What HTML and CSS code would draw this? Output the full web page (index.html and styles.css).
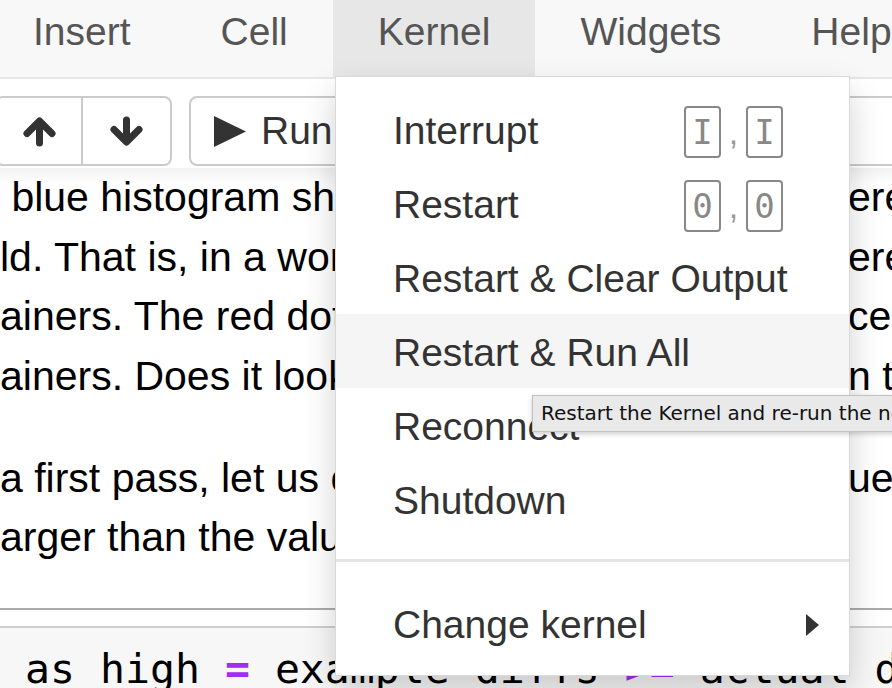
FILE: index.html
```html
<!DOCTYPE html>
<html>
<head>
<meta charset="utf-8">
<title>Notebook</title>
<link rel="stylesheet" href="styles.css">
</head>
<body>
<div class="page">
  <nav class="menubar">
    <span class="mitem first">Insert</span>
    <span class="mitem">Cell</span>
    <span class="mitem open">Kernel</span>
    <span class="mitem">Widgets</span>
    <span class="mitem">Help</span>
  </nav>

  <div class="toolbar">
    <div class="btn-group moves">
      <span class="btn icon-btn">
        <svg width="33" height="31" viewBox="0 0 33 31"><path d="M16.5 27V7M4 17.5L16.5 5L29 17.5" fill="none" stroke="#333" stroke-width="7" stroke-linecap="round" stroke-linejoin="round"/></svg>
      </span>
      <span class="btn icon-btn">
        <svg width="33" height="31" viewBox="0 0 33 31"><path d="M16.5 4V24M4 13.5L16.5 26L29 13.5" fill="none" stroke="#333" stroke-width="7" stroke-linecap="round" stroke-linejoin="round"/></svg>
      </span>
    </div>
    <div class="btn-group">
      <span class="btn run-btn">
        <svg width="32" height="31" viewBox="0 0 32 31"><path d="M0 0L32 15.5L0 31Z" fill="#333"/></svg>
        <span>Run</span>
      </span>
    </div>
  </div>

  <main class="notebook">
    <div class="text-cell">
      <p class="para">
        <span class="line"><span class="l">&nbsp;blue histogram shows</span><span class="r">ere</span></span>
        <span class="line"><span class="l">ld. That is, in a world</span><span class="r">ere</span></span>
        <span class="line"><span class="l">ainers. The red dot</span><span class="r">ce</span></span>
        <span class="line"><span class="l">ainers. Does it look</span><span class="r">n t</span></span>
      </p>
      <p class="para">
        <span class="line"><span class="l">a first pass, let us count</span><span class="r">ues</span></span>
        <span class="line"><span class="l">arger than the value</span><span class="r"></span></span>
      </p>
    </div>
    <div class="sep"></div>
    <div class="code-cell">
      <pre class="code">as high <span class="op">=</span> example diffs <span class="op">&gt;=</span> actual d</pre>
    </div>
  </main>

  <div class="dropdown">
    <div class="ditem"><span>Interrupt</span><span class="keys"><kbd>I</kbd><span class="comma">,</span><kbd>I</kbd></span></div>
    <div class="ditem"><span>Restart</span><span class="keys"><kbd>0</kbd><span class="comma">,</span><kbd>0</kbd></span></div>
    <div class="ditem"><span>Restart &amp; Clear Output</span></div>
    <div class="ditem hover"><span>Restart &amp; Run All</span></div>
    <div class="ditem"><span>Reconnect</span></div>
    <div class="ditem"><span>Shutdown</span></div>
    <div class="divider"></div>
    <div class="ditem sub"><span>Change kernel</span><svg width="13" height="22" viewBox="0 0 13 22"><path d="M0 0L13 11L0 22Z" fill="#333"/></svg></div>
  </div>

  <div class="tooltip">Restart the Kernel and re-run the notebook</div>
</div>
</body>
</html>
```

FILE: styles.css
```css
html, body {
  margin: 0;
  padding: 0;
  background: #fff;
}

.page {
  position: relative;
  width: 892px;
  height: 688px;
  overflow: hidden;
  font-family: "Liberation Sans", Arial, sans-serif;
  color: #000;
}

/* menubar */
.menubar {
  display: flex;
  height: 79px;
  box-sizing: border-box;
  background: #f8f8f8;
  border-bottom: 2px solid #e7e7e7;
  white-space: nowrap;
}

.mitem {
  display: block;
  height: 77px;
  box-sizing: border-box;
  padding: 2px 45px 0;
  font-size: 39px;
  line-height: 60px;
  color: #555;
  flex: none;
}

.mitem.first {
  margin-left: -12px;
}

.mitem.open {
  background: #e7e7e7;
}

/* toolbar */
.toolbar {
  display: flex;
  gap: 17px;
  padding: 17px 0 2px;
  white-space: nowrap;
}

.btn-group {
  display: flex;
  flex: none;
}

.btn-group.moves {
  margin-left: -5px;
}

.btn {
  display: flex;
  align-items: center;
  justify-content: center;
  height: 70px;
  box-sizing: border-box;
  border: 2px solid #cbcbcb;
  background: #fff;
  color: #333;
}

.icon-btn {
  width: 88px;
}

.icon-btn:first-child {
  border-radius: 8px 0 0 8px;
}

.icon-btn:last-child {
  border-left: none;
  width: 89px;
  border-radius: 0 8px 8px 0;
}

.run-btn {
  justify-content: flex-start;
  gap: 15px;
  padding-left: 23px;
  width: 900px;
  border-radius: 8px 0 0 8px;
  font-size: 39px;
}

/* notebook */
.notebook {
  background: linear-gradient(to bottom, rgba(0, 0, 0, 0.05), rgba(0, 0, 0, 0) 16px);
}

.text-cell {
  font-size: 41px;
  line-height: 59.5px;
}

.para {
  margin: 0 0 42.5px;
}

.para:last-child {
  margin-bottom: 0;
}

.line {
  display: flex;
  white-space: nowrap;
  height: 59.5px;
}

.l {
  flex: 0 0 335px;
  overflow: hidden;
}

.r {
  flex: none;
  margin-left: 513px;
}

.sep {
  margin-top: 40px;
  height: 2px;
  background: #ababab;
}

.code-cell {
  margin-top: 16px;
  border-top: 2px solid #cfcfcf;
  background: #f7f7f7;
  padding: 16px 0 20px 25px;
}

.code {
  margin: 0;
  font-family: "DejaVu Sans Mono", "Liberation Mono", monospace;
  font-size: 41.5px;
  line-height: normal;
  color: #000;
}

.op {
  color: #a22ff0;
  font-weight: bold;
}

/* dropdown */
.dropdown {
  position: absolute;
  left: 335px;
  top: 76px;
  width: 515px;
  box-sizing: border-box;
  padding: 15px 0;
  background: #fff;
  border: 1px solid rgba(0, 0, 0, 0.15);
  box-shadow: 0 15px 31px rgba(0, 0, 0, 0.18);
  color: #333;
  font-size: 39px;
  white-space: nowrap;
}

.ditem {
  display: flex;
  align-items: center;
  justify-content: space-between;
  height: 74px;
  box-sizing: border-box;
  padding: 4px 66px 0 57px;
  line-height: 70px;
}

.ditem.hover {
  background: #f5f5f5;
}

.ditem.sub {
  padding-right: 30px;
}

.keys {
  display: flex;
  align-items: center;
  margin-top: 1px;
}

kbd {
  display: block;
  width: 37px;
  height: 52px;
  box-sizing: border-box;
  border: 2px solid #888;
  border-radius: 4px;
  font-family: "DejaVu Sans Mono", monospace;
  font-size: 34px;
  line-height: 48px;
  text-align: center;
  color: #888;
}

.comma {
  display: block;
  width: 25px;
  text-align: center;
  font-size: 34px;
  line-height: 52px;
  color: #999;
}

.divider {
  height: 3px;
  margin: 23px 0 24px;
  background: #e5e5e5;
}

/* tooltip */
.tooltip {
  position: absolute;
  left: 532px;
  top: 395px;
  padding: 0 8px;
  height: 37px;
  box-sizing: border-box;
  line-height: 35px;
  font-family: "DejaVu Sans", sans-serif;
  font-size: 20px;
  color: #111;
  background: #e9e9e9;
  border: 1px solid #c2c2c2;
  box-shadow: 0 2px 5px rgba(0, 0, 0, 0.2);
  white-space: nowrap;
}
```
